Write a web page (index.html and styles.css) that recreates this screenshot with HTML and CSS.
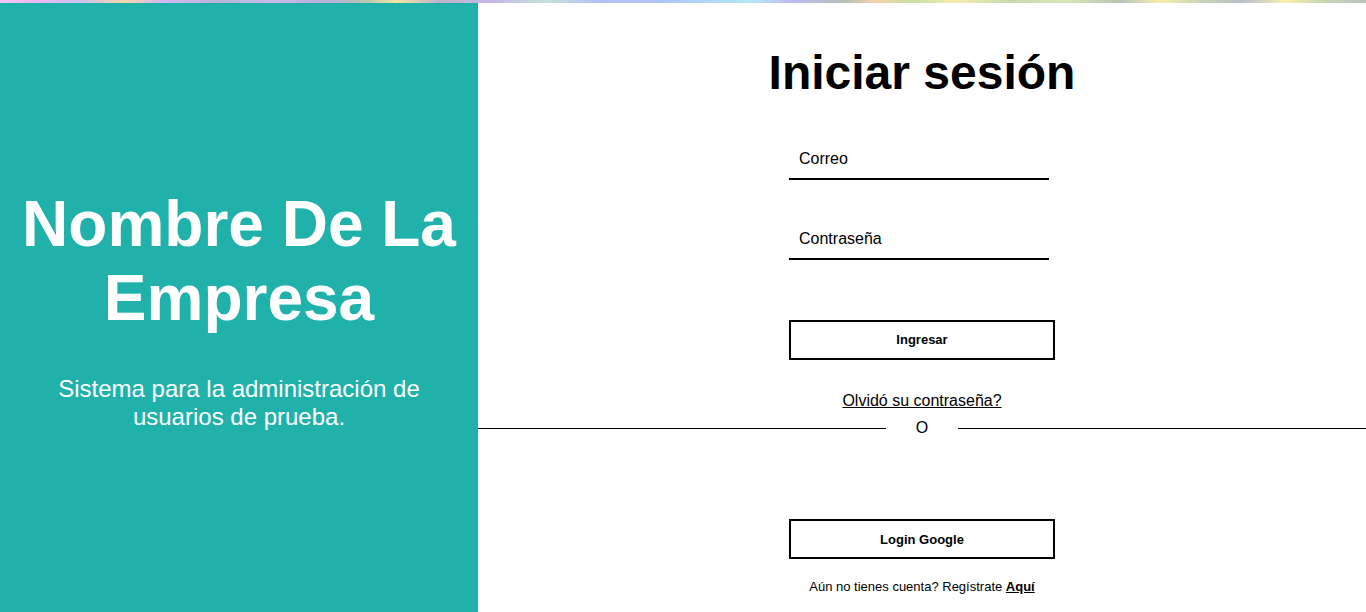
FILE: index.html
```html
<!DOCTYPE html>
<html lang="es">
<head>
<meta charset="utf-8">
<title>Iniciar sesión</title>
<link rel="stylesheet" href="styles.css">
</head>
<body>
<div class="strip"></div>
<div class="page">
  <section class="brand">
    <h1 class="brand-name">Nombre De La Empresa</h1>
    <p class="brand-sub">Sistema para la administración de usuarios de prueba.</p>
  </section>
  <section class="login">
    <h2 class="login-title">Iniciar sesión</h2>
    <form class="login-form">
      <input class="field field-first" type="email" placeholder="Correo">
      <input class="field field-second" type="password" placeholder="Contraseña">
      <button class="btn btn-submit" type="button">Ingresar</button>
    </form>
    <a class="forgot" href="#">Olvidó su contraseña?</a>
    <div class="divider"><span class="divider-line"></span><span class="divider-text">O</span><span class="divider-line"></span></div>
    <button class="btn btn-google" type="button">Login Google</button>
    <p class="register">Aún no tienes cuenta? Regístrate <a href="#">Aquí</a></p>
  </section>
</div>
</body>
</html>
```
FILE: styles.css
```css
html, body {
  margin: 0;
  padding: 0;
  overflow: hidden;
  background: #fff;
  font-family: "Liberation Sans", Arial, sans-serif;
  color: #000;
}

.strip {
  height: 3px;
  background: linear-gradient(90deg,
    #f2c6f0 0%, #e9b8f2 3%, #c9c3ee 6%, #f6d7a8 9%, #d1b6f3 12%, #b9b5d9 16%,
    #c6bbe8 20%, #b7b0d8 24%, #b8c8b0 27%, #f5e7a6 29%, #bdb6c7 32%, #c5b7ea 36%,
    #c3e3d9 40%, #b4c0f5 44%, #aec8f7 49%, #b6e8f2 55%, #bdbcf0 58%, #b7c1b3 62%,
    #f7d2aa 64%, #c9e0a8 67%, #f5ecac 70%, #c7d9b0 74%, #d8e7b3 78%, #b8c4b6 82%,
    #f5eeaa 85%, #c6d3b8 88%, #b9bfc9 91%, #f6f0ae 94%, #c8d6b7 97%, #b9c3bb 100%);
}

.page {
  display: flex;
  height: 612px;
}

.brand {
  width: 478px;
  flex: none;
  background: #20b2aa;
  color: #fff;
  display: flex;
  flex-direction: column;
  justify-content: center;
  align-items: center;
  text-align: center;
  padding: 0 18px;
  box-sizing: border-box;
}

.brand-name {
  margin: 0;
  font-size: 64px;
  font-weight: bold;
  line-height: normal;
}

.brand-sub {
  margin: 40px 0 0;
  font-size: 24px;
  line-height: normal;
}

.login {
  flex: 1;
  display: flex;
  flex-direction: column;
  align-items: center;
  padding-top: 42px;
}

.login-title {
  margin: 0;
  font-size: 48px;
  font-weight: bold;
  line-height: normal;
}

.login-form {
  width: 266px;
  display: flex;
  flex-direction: column;
  align-items: flex-start;
  margin-top: 40px;
}

.field {
  width: 260px;
  box-sizing: border-box;
  height: 40px;
  padding: 10px;
  border: none;
  border-bottom: 2px solid #000;
  outline: none;
  font-family: "Liberation Sans", Arial, sans-serif;
  font-size: 16px;
  color: #000;
  background: transparent;
}

.field::placeholder {
  color: #000;
  opacity: 1;
}

.field-second {
  margin-top: 40px;
}

.btn {
  width: 266px;
  height: 40px;
  box-sizing: border-box;
  background: #fff;
  border: 2px solid #000;
  font-family: "Liberation Sans", Arial, sans-serif;
  font-size: 13px;
  font-weight: bold;
  color: #000;
  padding: 0;
}

.btn-submit {
  margin-top: 60px;
  padding-bottom: 2px;
}

.forgot {
  margin-top: 32px;
  font-size: 16px;
  line-height: normal;
  color: #000;
  text-decoration: underline;
}

.divider {
  align-self: stretch;
  display: flex;
  align-items: center;
  margin-top: 9px;
  font-size: 16px;
  line-height: normal;
}

.divider-line {
  flex: 1;
  height: 1px;
  background: #000;
}

.divider-text {
  padding: 0 30px;
}

.btn-google {
  margin-top: 82px;
}

.register {
  margin: 20px 0 0;
  font-size: 13px;
  line-height: normal;
}

.register a {
  color: #000;
  font-weight: bold;
  text-decoration: underline;
}
```
